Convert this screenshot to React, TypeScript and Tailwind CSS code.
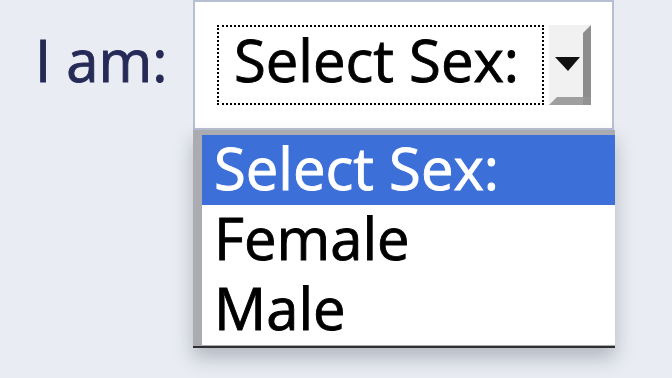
import React from "react";

const OPTIONS = ["Select Sex:", "Female", "Male"];

function ArrowButton() {
  return (
    <svg width="42" height="80" viewBox="0 0 42 80" className="ml-[5px] shrink-0">
      <rect x="0" y="0" width="42" height="80" fill="#f1f1f1" />
      <polygon points="34,8 42,0 42,80 34,80" fill="#8d8d8d" />
      <polygon points="0,80 8,72 42,72 42,80" fill="#9f9f9f" />
      <polygon points="34,72 42,72 42,80 34,80" fill="#929292" />
      <polygon points="6,32 31,32 19,46" fill="#111111" />
    </svg>
  );
}

export default function App() {
  return (
    <div
      className="relative w-[672px] h-[378px] overflow-hidden bg-[#e9ecf3] [-webkit-text-stroke:0.9px_currentColor]"
      style={{ fontFamily: '"Open Sans", "Noto Sans", sans-serif' }}
    >
      <div className="flex items-start">
        <div className="w-[158px] ml-[35px] mt-[27px] text-[58px] leading-[66px] text-[#262a57] whitespace-nowrap">
          I am:
        </div>
        <div className="w-[421px] h-[130px] bg-white border-2 border-[#b7bfd2] pl-[22px] pt-[23px] flex items-start">
          <div className="w-[327px] h-[80px] border-[2.5px] border-dotted border-black pl-[15px] text-[58px] leading-[66px] text-black whitespace-nowrap">
            Select Sex:
          </div>
          <ArrowButton />
        </div>
      </div>

      <div className="absolute left-[193px] top-[130px] w-[422px] h-[218px] bg-[#aaacb1] pt-[5px] pl-[9px] border-b-2 border-[#2f2f2f] shadow-[0_10px_18px_rgba(40,45,60,0.28)]">
        {OPTIONS.map((o, i) => (
          <div
            key={o}
            className={
              i === 0
                ? "h-[70px] pl-[12px] bg-[#3c6fd8] text-white text-[58px] leading-[65px] whitespace-nowrap"
                : "h-[70px] pl-[12px] bg-white text-black text-[58px] leading-[65px] whitespace-nowrap"
            }
          >
            {o}
          </div>
        ))}
      </div>
    </div>
  );
}
